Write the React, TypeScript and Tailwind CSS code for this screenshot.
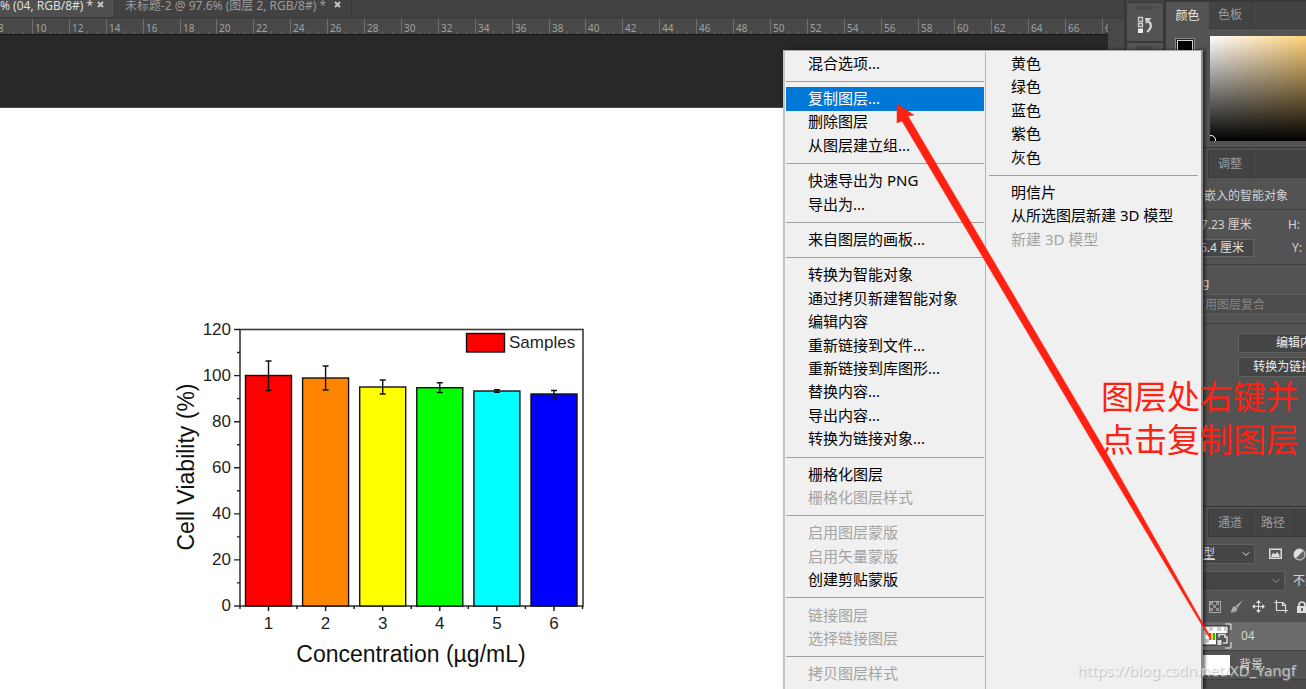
import React from "react";
import { ChevronDown } from "lucide-react";

type Entry = { label?: string; disabled?: boolean; active?: boolean };

const S: Entry = {};
const on = (label: string): Entry => ({ label });
const off = (label: string): Entry => ({ label, disabled: true });

const leftMenu: Entry[] = [
  on("混合选项..."), S,
  { label: "复制图层...", active: true }, on("删除图层"), on("从图层建立组..."), S,
  on("快速导出为 PNG"), on("导出为..."), S,
  on("来自图层的画板..."), S,
  on("转换为智能对象"), on("通过拷贝新建智能对象"), on("编辑内容"), on("重新链接到文件..."),
  on("重新链接到库图形..."), on("替换内容..."), on("导出内容..."), on("转换为链接对象..."), S,
  on("栅格化图层"), off("栅格化图层样式"), S,
  off("启用图层蒙版"), off("启用矢量蒙版"), on("创建剪贴蒙版"), S,
  off("链接图层"), off("选择链接图层"), S,
  off("拷贝图层样式"),
];

const rightMenu: Entry[] = [
  on("黄色"), on("绿色"), on("蓝色"), on("紫色"), on("灰色"), S,
  on("明信片"), on("从所选图层新建 3D 模型"), off("新建 3D 模型"),
];

function MenuEntries({ entries }: { entries: Entry[] }) {
  return (
    <>
      {entries.map((e, i) =>
        e.label ? (
          <button
            key={i}
            disabled={e.disabled}
            className={
              "flex min-h-0 flex-[2] items-center whitespace-nowrap pl-[22px] text-left text-[15px] leading-5 " +
              (e.active ? "bg-[#0078d7] text-white" : e.disabled ? "text-[#a3a3a3]" : "text-black")
            }
          >
            <span className="pb-[2px]">{e.label}</span>
          </button>
        ) : (
          <div key={i} role="separator" className="flex min-h-0 flex-1 items-center">
            <div className="h-px w-full bg-[#a0a0a0]" />
          </div>
        ),
      )}
    </>
  );
}

function ContextMenu() {
  return (
    <div className="absolute top-[50px] right-[103px] bottom-0 flex w-[420px] border-t border-r-2 border-l-2 border-t-[#a8a8a8] border-r-[#8d8d8d] border-l-[#c4c4c4] bg-[#f0f0f0] pt-px shadow-[2px_0_3px_rgba(0,0,0,0.6)]">
      <div className="ml-px flex w-[198px] flex-col pb-[3px]">
        <MenuEntries entries={leftMenu} />
      </div>
      <div className="mr-[3px] ml-px w-px bg-[#b5b5b5]" />
      <div className="flex w-[209px] flex-col pb-[3px]">
        <MenuEntries entries={rightMenu} />
        <div className="flex-[37]" />
      </div>
    </div>
  );
}

function Ruler() {
  const marks = Array.from({ length: 31 }, (_, i) => i);
  return (
    <svg className="h-[15px] w-full bg-[#484848]" aria-label="标尺">
      {marks.map((i) => {
        const x = Math.round(-5 + i * 36.9);
        return (
          <g key={i}>
            <rect x={x} y="0" width="1" height="15" fill="#6e6e6e" />
            <rect x={x + 18} y="12" width="1" height="3" fill="#6a6a6a" />
            <rect x={x + 28} y="12" width="1" height="3" fill="#6a6a6a" />
            <text x={x + 3} y="13" fontSize="10" fill="#a0a0a0">{8 + i * 2}</text>
          </g>
        );
      })}
    </svg>
  );
}

const bars = [
  { top: 375.5, lo: 390.5, hi: 361, fill: "#ff0000" },
  { top: 378, lo: 390, hi: 366, fill: "#ff8400" },
  { top: 387, lo: 394, hi: 380, fill: "#ffff00" },
  { top: 387.7, lo: 392.5, hi: 382.7, fill: "#00ff00" },
  { top: 391, lo: 392.3, hi: 389.7, fill: "#00ffff" },
  { top: 394, lo: 398, hi: 390.5, fill: "#0000ff" },
];

function Chart() {
  return (
    <svg width="450" height="370" viewBox="160 310 450 370" fontFamily='"Liberation Sans", Arial, sans-serif' fill="#1f1f1f">
      <rect x="240" y="329.5" width="343" height="276.5" fill="none" stroke="#3a3a3a" strokeWidth="1.6" />
      {bars.map((b, i) => {
        const c = 268.5 + i * 57.1;
        return (
          <g key={i} stroke="#111" strokeWidth="1.4">
            <rect x={c - 23} y={b.top} width="46" height={606 - b.top} fill={b.fill} />
            <path d={`M${c} ${b.hi}V${b.lo}M${c - 3} ${b.hi}h6M${c - 3} ${b.lo}h6`} />
            <path d={`M${c} 606v5M${c + 28.5} 606v3`} />
            <text x={c} y="629" fontSize="17" textAnchor="middle" stroke="none">{i + 1}</text>
          </g>
        );
      })}
      <path d="M240 606v3" stroke="#222" strokeWidth="1.4" />
      {[0, 20, 40, 60, 80, 100, 120].map((v) => {
        const y = 606 - v * 2.304;
        return (
          <g key={v}>
            <path d={`M234 ${y}h6` + (v ? `M237 ${y + 23}h3` : "")} stroke="#222" strokeWidth="1.4" />
            <text x="231" y={y + 5} fontSize="17" textAnchor="end">{v}</text>
          </g>
        );
      })}
      <rect x="466.5" y="333.5" width="38" height="18.5" fill="#f00" stroke="#111" strokeWidth="1.4" />
      <text x="509" y="348" fontSize="17">Samples</text>
      <text x="411" y="662" fontSize="23" textAnchor="middle" fill="#111">Concentration (µg/mL)</text>
      <text transform="translate(194 467) rotate(-90)" fontSize="23" textAnchor="middle" fill="#111">Cell Viability (%)</text>
    </svg>
  );
}

function CloseIcon() {
  return (
    <svg width="7" height="7" viewBox="0 0 7 7" stroke="#c4c4c4" strokeWidth="2">
      <path d="M1 1l5 5M6 1 1 6" />
    </svg>
  );
}

function Document() {
  return (
    <main className="flex min-w-0 flex-1 flex-col">
      <div className="flex h-[18px] items-start overflow-hidden border-b border-[#393939] bg-[#424242] text-[12px] leading-3 whitespace-nowrap">
        <div className="flex h-full w-[115px] items-start justify-between border-r border-[#393939] bg-[#4f4f4f] pr-2.5 text-[#dedede]">
          <span>% (04, RGB/8#) *</span>
          <button aria-label="关闭" className="pt-px"><CloseIcon /></button>
        </div>
        <div className="flex h-full w-[237px] items-start justify-between border-r border-[#393939] pr-2.5 pl-2.5 text-[#9b9b9b]">
          <span>未标题-2 @ 97.6% (图层 2, RGB/8#) *</span>
          <button aria-label="关闭" className="pt-px"><CloseIcon /></button>
        </div>
      </div>
      <div className="flex min-h-0 flex-1 pt-px">
        <div className="flex min-w-0 flex-1 flex-col">
          <Ruler />
          <div className="h-[74px] border-t border-b border-t-[#161616] border-b-[#4a4a4a] bg-[#282828]" />
          <div className="min-h-0 flex-1 overflow-hidden bg-white pt-[202px] pl-[160px]">
            <Chart />
          </div>
        </div>
        <div className="w-4 bg-[#484848]" />
      </div>
    </main>
  );
}

function Grip() {
  return (
    <div className="flex gap-[2px]">
      {[0, 1, 2, 3, 4, 5, 6].map((i) => <span key={i} className="h-1 w-px bg-[#383838]" />)}
    </div>
  );
}

function Dock() {
  return (
    <aside className="flex w-[42px] flex-col border-x-2 border-[#383838] bg-[#434343] pt-[2px]">
      <div className="flex h-10 flex-col items-center gap-1.5 border border-[#393939] bg-[#535353] pt-[3px]">
        <Grip />
        <button aria-label="历史记录">
          <svg width="16" height="18" viewBox="0 0 16 18" fill="none" stroke="#d0d0d0">
            <path d="M1.5 1.5h4v4h-4zM1.5 7.5h4v3h-4z" strokeWidth="1.3" />
            <path d="M1 12.5h5V17H1z" fill="#ededed" stroke="none" />
            <path d="M8 2h6.500L9 8z" fill="#d4d4d4" stroke="none" />
            <path d="M11 5c4 3 4 7-1 11" strokeWidth="2.2" />
          </svg>
        </button>
      </div>
      <div className="flex flex-1 flex-col items-center border border-[#393939] bg-[#535353] pt-[3px]">
        <Grip />
      </div>
    </aside>
  );
}

const tab = "flex w-[43px] shrink-0 items-center justify-center border-r border-b border-[#393939] text-[12px] text-[#9c9c9c]";
const hiddenTab = "w-[43px] shrink-0 border-r border-[#393939] bg-[#535353]";

function ColorPanel() {
  return (
    <section className="flex h-[146px] flex-col border-b border-[#363636]">
      <div className="flex h-[27px] bg-[#434343]">
        <button className="flex w-[43px] shrink-0 items-center justify-center bg-[#535353] text-[12px] text-[#e8e8e8]">颜色</button>
        <button className={tab}>色板</button>
        <div className="flex-1 border-b border-[#393939]" />
      </div>
      <div className="flex flex-1 items-start pt-[7px]">
        <button aria-label="前景色" className="mt-[2px] ml-[9px] h-5 w-5 border border-[#8a8a8a] bg-[#222] p-px">
          <span className="block h-full border border-[#d8d8d8] bg-black" />
        </button>
        <div className="relative ml-[15px] h-[105px] flex-1 overflow-hidden bg-[linear-gradient(to_bottom,transparent,#000),linear-gradient(to_right,#fff,#ffd27a)]">
          <div className="absolute -bottom-1 -left-1 h-[10px] w-[10px] rounded-full border border-white" />
        </div>
      </div>
    </section>
  );
}

function PropertiesPanel() {
  return (
    <section className="mt-[2px] flex h-[357px] flex-col border-b border-[#363636] text-[12px] whitespace-nowrap text-[#d2d2d2]">
      <div className="flex h-[28px] bg-[#434343]">
        <div className={hiddenTab} />
        <button className={tab}>调整</button>
        <div className="flex-1 border-b border-[#393939]" />
      </div>
      <div className="flex h-[32px] items-center overflow-hidden border-b border-[#404040] pt-[4px] pl-[38px] leading-4">嵌入的智能对象</div>
      <div className="flex h-[55px] flex-col justify-center gap-1 border-b border-[#404040] pb-[2px]">
        <div className="flex h-[19px] items-center justify-between pr-1.5 pl-[28px]">
          <span>27.23 厘米</span>
          <span>H:</span>
        </div>
        <div className="flex h-[19px] items-center justify-between pr-1">
          <input aria-label="X" defaultValue="6.4 厘米" className="h-[18px] w-[88px] border border-[#666] bg-[#454545] pl-[33px] text-[12px] text-[#e0e0e0]" />
          <span>Y:</span>
        </div>
      </div>
      <div className="flex h-[29px] items-center pt-1.5 pl-[36px]">g</div>
      <div className="flex h-[21px] items-center border border-r-0 border-[#5f5f5f] bg-[#4c4c4c] pl-[26px] text-[#858585]">应用图层复合</div>
      <div className="h-[9px] border-b border-[#404040]" />
      <div className="flex flex-col gap-1 overflow-hidden pt-[9px] pl-[72px]">
        <button className="h-5 w-[124px] rounded-[2px] border border-[#616161] bg-[#454545] text-[12px] leading-4 text-[#eee]">编辑内容</button>
        <button className="h-5 w-[124px] rounded-[2px] border border-[#616161] bg-[#454545] text-[12px] leading-4 text-[#eee]">转换为链接对象...</button>
      </div>
    </section>
  );
}

function LayersPanel() {
  return (
    <section className="mt-[2px] flex flex-1 flex-col text-[12px] whitespace-nowrap text-[#d6d6d6]">
      <div className="flex h-[28px] bg-[#434343]">
        <div className={hiddenTab} />
        <button className={tab}>通道</button>
        <button className={tab}>路径</button>
        <div className="flex-1 border-b border-[#393939]" />
      </div>
      <div className="flex h-[34px] items-center overflow-hidden">
        <button className="flex h-5 w-[89px] shrink-0 items-center justify-between rounded-[2px] border border-[#616161] bg-[#454545] pr-0.5 pl-[36px]">
          <span className="underline">型</span>
          <ChevronDown size={12} />
        </button>
        <svg width="13" height="12" viewBox="0 0 13 12" className="ml-[14px] shrink-0">
          <rect x=".75" y="1.25" width="11.5" height="9" fill="none" stroke="#dcdcdc" strokeWidth="1.5" />
          <path d="M2.500 9V7l2-2.500L6 6.500 8 4l2.500 3v2z" fill="#dcdcdc" />
        </svg>
        <svg width="13" height="13" viewBox="0 0 13 13" className="ml-[11px] shrink-0">
          <circle cx="6.5" cy="6.5" r="5.5" fill="#666" stroke="#dcdcdc" />
          <path d="M2.600 10.400A5.500 5.500 0 0 1 10.400 2.600z" fill="#e0e0e0" />
        </svg>
      </div>
      <div className="flex h-[20px] items-center gap-2 overflow-hidden">
        <button aria-label="混合模式" className="flex h-5 w-[119px] shrink-0 items-center justify-end rounded-[2px] border border-[#616161] bg-[#454545] pr-0.5 text-[#999]">
          <ChevronDown size={12} />
        </button>
        <span>不透明度</span>
      </div>
      <div className="flex h-[31px] items-center gap-[9px] overflow-hidden pl-[43px] text-[#d6d6d6]">
        <svg width="12" height="12" viewBox="0 0 12 12" className="shrink-0">
          <rect x=".5" y=".5" width="11" height="11" fill="none" stroke="#a8a8a8" />
          <path d="M1 1h3v3H1zM7 1h3v3H7zM4 4h3v3H4zM1 7h3v3H1zM7 7h3v3H7z" fill="#929292" />
        </svg>
        <svg width="13" height="13" viewBox="0 0 13 13" className="shrink-0" fill="#a8a8a8">
          <path d="M13 0 5.500 6l2 2z" />
          <path d="M5 6.200 7.300 8.500c.6 2.600-2.800 4.500-7.300 3.800 2-.8 1.200-2.300 2.200-4.300.6-1.300 1.800-1.900 2.800-1.800z" />
        </svg>
        <svg width="13" height="13" viewBox="0 0 13 13" className="shrink-0" fill="#dedede">
          <path d="M6 2h1v9H6zM2 6h9v1H2z" />
          <path d="M6.500 0 9 3H4zM6.500 13 4 10h5zM0 6.500 3 4v5zM13 6.500 10 9V4z" />
        </svg>
        <svg width="14" height="13" viewBox="0 0 14 13" className="shrink-0" fill="none" stroke="#dedede" strokeWidth="1.2">
          <path d="M0 2.500h9l2.500 2.500v8M2.500 0v10.500H14M8.500 2.500V5.500H11.500" />
        </svg>
        <svg width="10" height="12" viewBox="0 0 10 12" className="shrink-0">
          <path d="M2 6V4a3 3 0 0 1 6 0v2" fill="none" stroke="#dedede" strokeWidth="1.6" />
          <path d="M0 5h10v7H0z" fill="#dedede" />
          <path d="M4 7h2v3H4z" fill="#666" />
        </svg>
      </div>
      <div className="flex h-[28px] items-center bg-[#6b6b6b] pl-[34px]">
        <svg width="33" height="26" viewBox="0 0 33 26" className="mr-2 shrink-0">
          <path d="M0 3h28v19H0z" fill="#fff" stroke="#222" />
          <path d="M1 4h4v4H1zM9 4h4v4H9zM17 4h4v4h-4zM24 4h4v4h-4zM5 8h4v4H5zM5 16h4v4H5z" fill="#ccc" />
          <path d="M9 10h2v7H9z" fill="#f33" /><path d="M11 10h2v7h-2z" fill="#fd0" /><path d="M13 10h2v7h-2z" fill="#0c0" />
          <path d="M16 10h13v13H16z" fill="#555" />
          <path d="M17.500 17h4v5h-4z" fill="#ddd" />
          <path d="M19 14.500v-3h6v3M24 14h3v6h-4" fill="none" stroke="#ddd" strokeWidth="1.5" />
          <path d="M25 1h6v6M31 19v6h-6M0 25h5" fill="none" stroke="#eee" />
        </svg>
        <span>04</span>
      </div>
      <div className="flex h-[29px] items-center gap-[9px] border-t border-[#404040] pl-[34px]">
        <div className="h-5 w-[30px] bg-white" />
        <span>背景</span>
      </div>
      <div className="flex-1 border-t border-[#404040] bg-[#4a4a4a]" />
    </section>
  );
}

export default function App() {
  return (
    <div className='relative flex h-screen w-full overflow-hidden bg-[#424242] font-["Noto_Sans","Noto_Sans_CJK_SC",sans-serif]'>
      <Document />
      <Dock />
      <div className="flex w-[140px] shrink-0 flex-col border-t-2 border-[#383838] bg-[#535353]">
        <ColorPanel />
        <PropertiesPanel />
        <LayersPanel />
      </div>
      <ContextMenu />
      <svg className="pointer-events-none absolute top-[100px] right-[92px] h-[540px] w-[320px]" viewBox="894 100 320 540" aria-hidden="true">
        <path d="M897 104 914 115 908 116 1102 445 1210 636 1209 637 1096 448 902 121 897 123z" fill="#ff2213" stroke="#ff2213" strokeWidth=".5" />
      </svg>
      <p className="absolute top-[375px] right-[7px] text-[33px] leading-[43px] font-normal whitespace-nowrap text-[#ff2213]">
        图层处右键并
        <br />
        点击复制图层
      </p>
      <p className="absolute right-[10px] bottom-[9px] text-[15px] leading-5 whitespace-nowrap text-white/60 [text-shadow:1px_1px_1px_#9999]">
        https://blog.csdn.net/XD_Yangf
      </p>
    </div>
  );
}
